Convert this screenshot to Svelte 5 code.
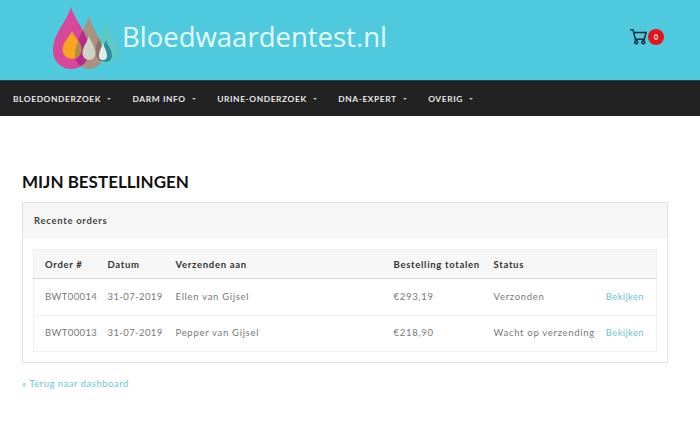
<script lang="ts">
  const menu = ['BLOEDONDERZOEK', 'DARM INFO', 'URINE-ONDERZOEK', 'DNA-EXPERT', 'OVERIG'];

  const orders = [
    { id: 'BWT00014', date: '31-07-2019', name: 'Ellen van Gijsel', total: '€293,19', status: 'Verzonden' },
    { id: 'BWT00013', date: '31-07-2019', name: 'Pepper van Gijsel', total: '€218,90', status: 'Wacht op verzending' }
  ];

  // teardrop from its tip down to the bottom, r is half the width
  const drop = (cx: number, top: number, bottom: number, r: number) => {
    const cy = bottom - r;
    const h = cy - top;
    return `M${cx} ${top} C${cx + r * 0.25} ${top + h * 0.35} ${cx + r} ${top + h * 0.6} ${cx + r} ${cy}
      A${r} ${r} 0 0 1 ${cx - r} ${cy} C${cx - r} ${top + h * 0.6} ${cx - r * 0.25} ${top + h * 0.35} ${cx} ${top}Z`;
  };

  const pink = drop(71, 7, 69, 18);
  const tan = drop(89, 16, 69, 14);
  const green = drop(107, 23, 63, 11.5);
  const orange = drop(72, 31, 59, 9.5);
  const cream = drop(89, 36, 60, 6.5);
  const teal = drop(106, 40, 62, 6);
  const pale = drop(103, 43, 60, 4);
</script>

<header class="top">
  <a class="logo" href="#home">
    <svg width="66" height="63" viewBox="53 7 66 63" aria-hidden="true">
      <defs>
        <clipPath id="in-pink"><path d={pink} /></clipPath>
        <clipPath id="in-tan"><path d={tan} /></clipPath>
        <clipPath id="in-green"><path d={green} /></clipPath>
      </defs>
      <path d={green} fill="#5ec8c4" />
      <path d={tan} fill="#a8917f" />
      <path d={pink} fill="#d9479b" />
      <path d={tan} fill="#b62a8d" clip-path="url(#in-pink)" />
      <path d={green} fill="#8d7169" clip-path="url(#in-tan)" />
      <path d={orange} fill="#f9a51f" />
      <path d={orange} fill="#a98f45" clip-path="url(#in-tan)" />
      <path d={cream} fill="#cfd3c4" />
      <path d={cream} fill="#20a9b0" clip-path="url(#in-green)" />
      <path d={teal} fill="#2b9097" />
      <path d={pale} fill="#dfeee8" />
    </svg>
    <span class="logo-text">Bloedwaardentest.nl</span>
  </a>
  <a class="cart" href="#cart" aria-label="Winkelwagen">
    <svg width="17" height="16" viewBox="0 0 19 18" fill="none" stroke="#0e2a36" stroke-width="1.6" aria-hidden="true">
      <path d="M0 1 H3.4 L6 11.5 H16 L18 4 H4.2" />
      <circle cx="7" cy="15" r="1.7" />
      <circle cx="15" cy="15" r="1.7" />
    </svg>
    <span class="badge">0</span>
  </a>
</header>

<nav class="menu">
  {#each menu as item}
    <a href="#menu">{item}<i class="caret"></i></a>
  {/each}
</nav>

<main class="page">
  <h1>MIJN BESTELLINGEN</h1>

  <section class="card">
    <div class="card-head">Recente orders</div>
    <div class="card-body">
      <table>
        <thead>
          <tr>
            <th class="c-id">Order #</th>
            <th class="c-date">Datum</th>
            <th class="c-name">Verzenden aan</th>
            <th class="c-total">Bestelling totalen</th>
            <th class="c-status">Status</th>
            <th></th>
          </tr>
        </thead>
        <tbody>
          {#each orders as order}
            <tr>
              <td class="num">{order.id}</td>
              <td class="num">{order.date}</td>
              <td>{order.name}</td>
              <td>{order.total}</td>
              <td>{order.status}</td>
              <td class="view"><a href="#order">Bekijken</a></td>
            </tr>
          {/each}
        </tbody>
      </table>
    </div>
  </section>

  <a class="back" href="#dashboard">« Terug naar dashboard</a>
</main>

<style>
  :global(body) {
    margin: 0;
    background: #fff;
    font-family: Lato, "Open Sans", sans-serif;
    color: #666;
  }

  a {
    text-decoration: none;
  }

  .top {
    height: 80px;
    background: #4fc9dd;
    display: flex;
    align-items: flex-start;
    justify-content: space-between;
    padding: 0 36px 0 53px;
  }

  .logo {
    display: flex;
    align-items: flex-start;
    gap: 3px;
    padding-top: 7px;
  }

  .logo-text {
    font-family: "Open Sans", sans-serif;
    font-size: 27.5px;
    line-height: 36px;
    margin-top: 12px;
    color: #e6fbf8;
  }

  .cart {
    display: flex;
    align-items: center;
    gap: 1px;
    padding-top: 29px;
  }

  .badge {
    width: 16px;
    height: 16px;
    border-radius: 50%;
    background: #e3141b;
    color: #fff;
    font-size: 7px;
    font-weight: 700;
    line-height: 16px;
    text-align: center;
  }

  .menu {
    height: 36px;
    background: #222;
    border-top: 1px solid #1d4a50;
    box-sizing: border-box;
    display: flex;
    align-items: center;
    gap: 21.5px;
    padding-left: 13px;
  }

  .menu a {
    color: #e8e8e8;
    font-size: 8.4px;
    font-weight: 700;
    letter-spacing: 0.6px;
    display: flex;
    align-items: center;
  }

  .caret {
    width: 0;
    height: 0;
    margin-left: 6px;
    border: 2px solid transparent;
    border-top-color: #bbb;
    border-bottom-width: 0;
  }

  .page {
    padding: 56px 32px 0 22px;
  }

  h1 {
    margin: 0 0 11px;
    font-size: 17px;
    line-height: 19px;
    font-weight: 700;
    color: #111;
  }

  .card {
    border: 1px solid #e2e2e2;
  }

  .card-head {
    height: 35px;
    line-height: 35px;
    padding-left: 11px;
    background: #f7f7f7;
    font-size: 9.5px;
    font-weight: 700;
    letter-spacing: 0.7px;
    color: #444;
  }

  .card-body {
    padding: 11px 10px 10px;
  }

  table {
    width: 100%;
    border-collapse: collapse;
    border: 1px solid #efefef;
    table-layout: fixed;
    font-size: 9.5px;
    letter-spacing: 0.7px;
  }

  th {
    box-sizing: border-box;
    height: 29px;
    background: #f7f7f7;
    border-bottom: 1px solid #d8d8d8;
    text-align: left;
    font-weight: 700;
    color: #333;
    padding: 0 0 0 11px;
    white-space: nowrap;
  }

  td {
    height: 37px;
    padding: 0 0 2px 11px;
    border-bottom: 1px solid #f1f1f1;
    color: #777;
    white-space: nowrap;
    box-sizing: border-box;
  }

  tbody tr:last-child td {
    height: 36px;
  }

  td.num {
    letter-spacing: 0.4px;
  }

  .c-id { width: 63px; }
  .c-date { width: 68px; }
  .c-name { width: 218px; }
  .c-total { width: 100px; }
  .c-status { width: 100px; }

  .view {
    text-align: right;
    padding-right: 12px;
    letter-spacing: 0.35px;
  }

  .view a,
  .back {
    color: #6dc4d4;
  }

  .back {
    display: block;
    margin-top: 15px;
    font-size: 9.5px;
    letter-spacing: 0.5px;
  }
</style>
